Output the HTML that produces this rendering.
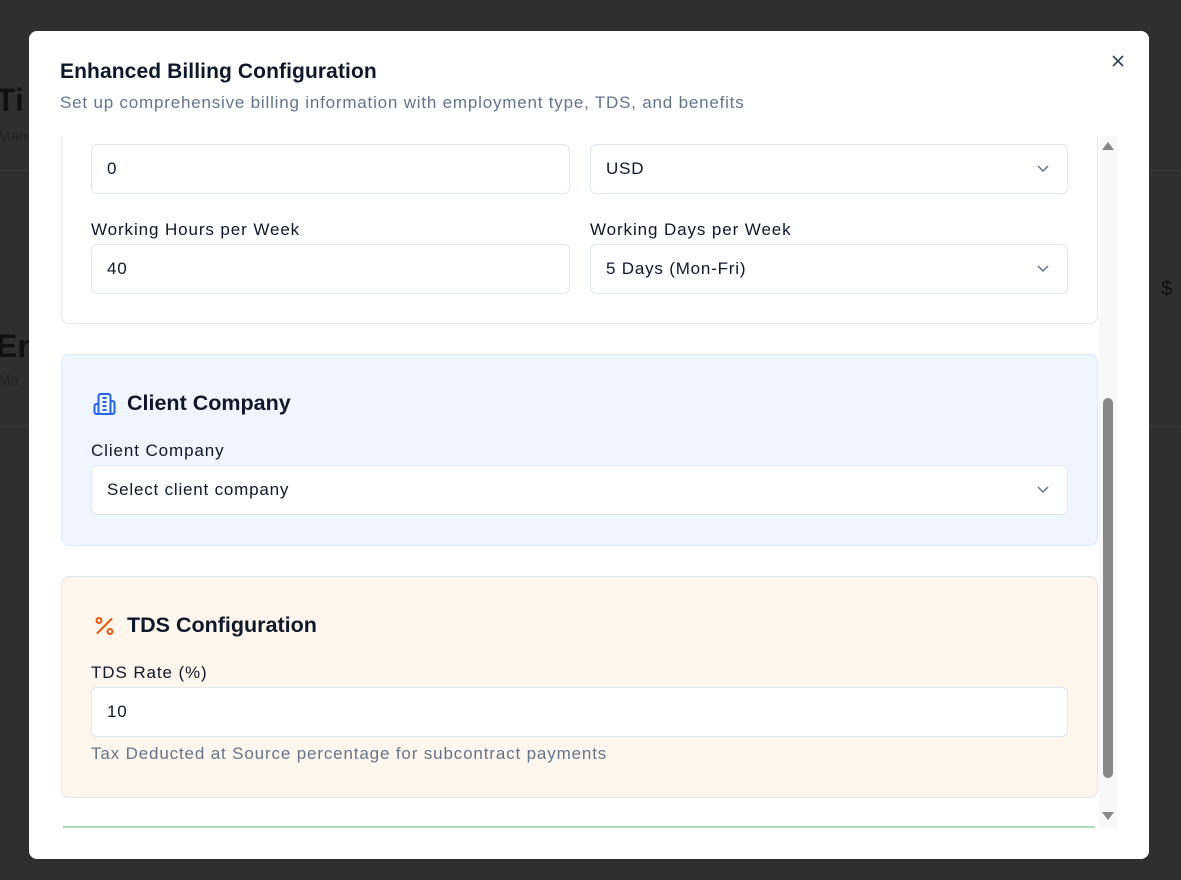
<!DOCTYPE html>
<html><head><style>
*{box-sizing:border-box;margin:0;padding:0}
body{width:1181px;height:880px;background:#2f2f2f;font-family:"Liberation Sans",Arial,sans-serif;position:relative;overflow:hidden;color:#0f172a}
.bg{position:absolute;color:#111;font-weight:bold}
.modal{position:absolute;left:29px;top:31px;width:1120px;height:828px;background:#fff;border-radius:8px;overflow:hidden}
h1{position:absolute;left:31px;top:29px;font-size:21px;font-weight:bold;color:#0f172a;letter-spacing:0.1px}
.sub{position:absolute;left:31px;top:62px;font-size:17px;letter-spacing:0.8px;color:#64748b}
.close{position:absolute;left:1082px;top:23px}
.scroll{position:absolute;left:31px;top:105px;width:1058px;height:692px;overflow:hidden}
.card{position:absolute;left:1px;width:1037px;border:1px solid #e2e8f0;border-radius:8px}
.in{position:absolute;height:50px;border:1px solid #e2e8f0;border-radius:6px;background:#fff;font-size:17px;letter-spacing:0.8px;padding:0 15px;line-height:48px;color:#0f172a}
.lbl{position:absolute;font-size:17px;letter-spacing:0.9px;color:#0f172a}
.chev{position:absolute;right:18px;top:20px}
.sec{position:absolute;left:30px;font-size:21.5px;font-weight:bold;display:flex;align-items:center;gap:10px}
.sb{position:absolute;left:1070px;top:105px;width:18px;height:692px;background:#f8f8f8}
</style></head><body>
<div class="bg" style="left:-4px;top:82px;font-size:32px">Ti</div>
<div class="bg" style="left:-2px;top:128px;font-size:15px;font-weight:normal;color:#222">Mana</div>
<div class="bg" style="left:-4px;top:328px;font-size:32px">En</div>
<div class="bg" style="left:-2px;top:372px;font-size:15px;font-weight:normal;color:#222">Ma</div>
<div class="bg" style="left:1161px;top:278px;font-size:20px;font-weight:normal">$</div>
<div style="position:absolute;left:0;top:170px;width:1181px;height:1px;background:#3a3a3a"></div>
<div style="position:absolute;left:0;top:425px;width:1181px;height:1px;background:#3a3a3a"></div>
<div class="modal">
<h1>Enhanced Billing Configuration</h1>
<div class="sub">Set up comprehensive billing information with employment type, TDS, and benefits</div>
<svg class="close" width="14" height="14" viewBox="0 0 14 14"><path d="M2 2L12 12M12 2L2 12" stroke="#334155" stroke-width="1.6"/></svg>
<div class="scroll">
 <div class="card" style="top:-40px;height:228px;background:#fff">
  <div class="in" style="left:29px;top:47px;width:479px">0</div>
  <div class="in" style="left:528px;top:47px;width:478px">USD<svg class="chev" width="12" height="8" viewBox="0 0 12 8"><path d="M1 1l5 5 5-5" fill="none" stroke="#64748b" stroke-width="1.5"/></svg></div>
  <div class="lbl" style="left:29px;top:123px">Working Hours per Week</div>
  <div class="lbl" style="left:528px;top:123px">Working Days per Week</div>
  <div class="in" style="left:29px;top:147px;width:479px">40</div>
  <div class="in" style="left:528px;top:147px;width:478px">5 Days (Mon-Fri)<svg class="chev" width="12" height="8" viewBox="0 0 12 8"><path d="M1 1l5 5 5-5" fill="none" stroke="#64748b" stroke-width="1.5"/></svg></div>
 </div>
 <div class="card" style="top:218px;height:192px;background:#eff6ff;border-color:#dbeafe">
  <div class="sec" style="top:36px"><svg width="25" height="24" viewBox="0 0 24 24" fill="none" stroke="#2563eb" stroke-width="2" stroke-linejoin="round"><path d="M6 22V4a2 2 0 0 1 2-2h8a2 2 0 0 1 2 2v18Z"/><path d="M6 12H4a2 2 0 0 0-2 2v6a2 2 0 0 0 2 2h2M18 9h2a2 2 0 0 1 2 2v9a2 2 0 0 1-2 2h-2M10 6h4M10 10h4M10 14h4M10 18h4"/></svg>Client Company</div>
  <div class="lbl" style="left:29px;top:86px">Client Company</div>
  <div class="in" style="left:29px;top:110px;width:977px">Select client company<svg class="chev" width="12" height="8" viewBox="0 0 12 8"><path d="M1 1l5 5 5-5" fill="none" stroke="#64748b" stroke-width="1.5"/></svg></div>
 </div>
 <div class="card" style="top:440px;height:222px;background:#fff7ed;border-color:#e2e8f0">
  <div class="sec" style="top:36px"><svg width="25" height="24" viewBox="0 0 24 24" fill="none" stroke="#ea580c" stroke-width="2" stroke-linecap="round"><path d="M19 5L5 19"/><circle cx="6.5" cy="6.5" r="2.5"/><circle cx="17.5" cy="17.5" r="2.5"/></svg>TDS Configuration</div>
  <div class="lbl" style="left:29px;top:86px">TDS Rate (%)</div>
  <div class="in" style="left:29px;top:110px;width:977px">10</div>
  <div style="position:absolute;left:29px;top:167px;font-size:17px;letter-spacing:0.85px;color:#64748b">Tax Deducted at Source percentage for subcontract payments</div>
 </div>
 <div style="position:absolute;left:3px;top:690px;width:1032px;height:2px;background:#a7dfb8"></div>
</div>
<div class="sb">
 <svg style="position:absolute;left:3px;top:6px" width="12" height="8"><path d="M0 8L6 0L12 8Z" fill="#888"/></svg>
 <div style="position:absolute;left:4px;top:262px;width:10px;height:380px;background:#888;border-radius:5px"></div>
 <svg style="position:absolute;left:3px;top:676px" width="12" height="8"><path d="M0 0L12 0L6 8Z" fill="#888"/></svg>
</div>
</div>
</body></html>
